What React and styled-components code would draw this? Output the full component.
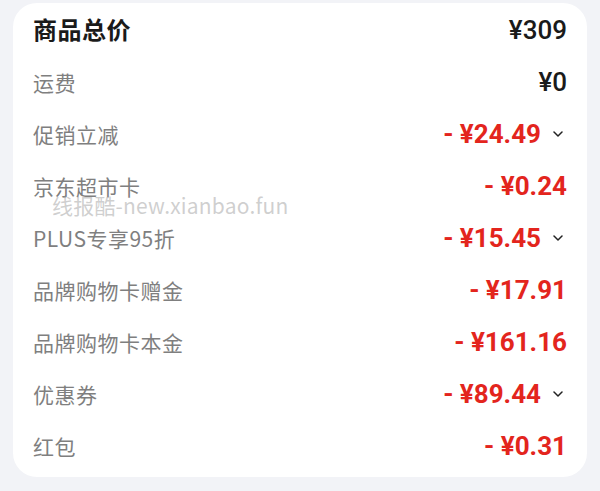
import React from "react";
import styled, { createGlobalStyle } from "styled-components";

const GlobalStyle = createGlobalStyle`
  html, body {
    margin: 0;
    padding: 0;
    background: #f2f3f7;
  }
  body {
    font-family: Roboto, "Noto Sans CJK SC", "Noto Sans", sans-serif;
  }
`;

const Page = styled.div`
  width: 600px;
  height: 491px;
  padding: 3px 13px 0 13px;
  box-sizing: border-box;
`;

const Card = styled.div`
  position: relative;
  background: #ffffff;
  border-radius: 24px;
  padding: 1px 20px 5px 20px;
  display: flex;
  flex-direction: column;
`;

const Row = styled.div`
  height: 52px;
  display: flex;
  align-items: center;
  justify-content: space-between;
`;

const Label = styled.div`
  font-family: "Noto Sans CJK SC", sans-serif;
  font-size: ${p => (p.$title ? "24px" : "21px")};
  font-weight: ${p => (p.$title ? 700 : 400)};
  color: ${p => (p.$title ? "#1a1a1a" : "#7f7f7f")};
  letter-spacing: 0.5px;
  margin-bottom: ${p => (p.$title ? "4px" : "0")};
`;

const Right = styled.div`
  display: flex;
  align-items: center;
`;

const Amount = styled.div`
  font-family: Roboto, "Noto Sans CJK SC", sans-serif;
  font-size: 26px;
  font-weight: ${p => (p.$red ? 700 : 500)};
  color: ${p => (p.$red ? "#e3251d" : "#1a1a1a")};
  white-space: pre;
`;

const Chevron = styled.div`
  width: 26px;
  display: flex;
  align-items: center;
  padding-left: 12px;
  box-sizing: border-box;
`;

const Watermark = styled.div`
  position: absolute;
  left: 39px;
  top: 187px;
  font-family: "Noto Sans CJK SC", sans-serif;
  font-size: 21px;
  letter-spacing: 0.2px;
  color: rgba(160, 160, 160, 0.5);
  pointer-events: none;
`;

const rows = [
  { label: "运费", amount: "¥0" },
  { label: "促销立减", amount: "- ¥24.49", red: true, more: true },
  { label: "京东超市卡", amount: "- ¥0.24", red: true },
  { label: "PLUS专享95折", amount: "- ¥15.45", red: true, more: true },
  { label: "品牌购物卡赠金", amount: "- ¥17.91", red: true },
  { label: "品牌购物卡本金", amount: "- ¥161.16", red: true },
  { label: "优惠券", amount: "- ¥89.44", red: true, more: true },
  { label: "红包", amount: "- ¥0.31", red: true },
];

function ChevronIcon() {
  return (
    <svg width="10" height="6" viewBox="0 0 10 6">
      <path d="M1 1 L5 5 L9 1" fill="none" stroke="#222" strokeWidth="1.5" strokeLinecap="round" strokeLinejoin="round" />
    </svg>
  );
}

export default function App() {
  return (
    <Page>
      <GlobalStyle />
      <Card>
        <Row>
          <Label $title>商品总价</Label>
          <Right>
            <Amount>¥309</Amount>
          </Right>
        </Row>
        {rows.map(r => (
          <Row key={r.label}>
            <Label>{r.label}</Label>
            <Right>
              <Amount $red={r.red}>{r.amount}</Amount>
              {r.more && (
                <Chevron>
                  <ChevronIcon />
                </Chevron>
              )}
            </Right>
          </Row>
        ))}
        <Watermark>线报酷-new.xianbao.fun</Watermark>
      </Card>
    </Page>
  );
}
